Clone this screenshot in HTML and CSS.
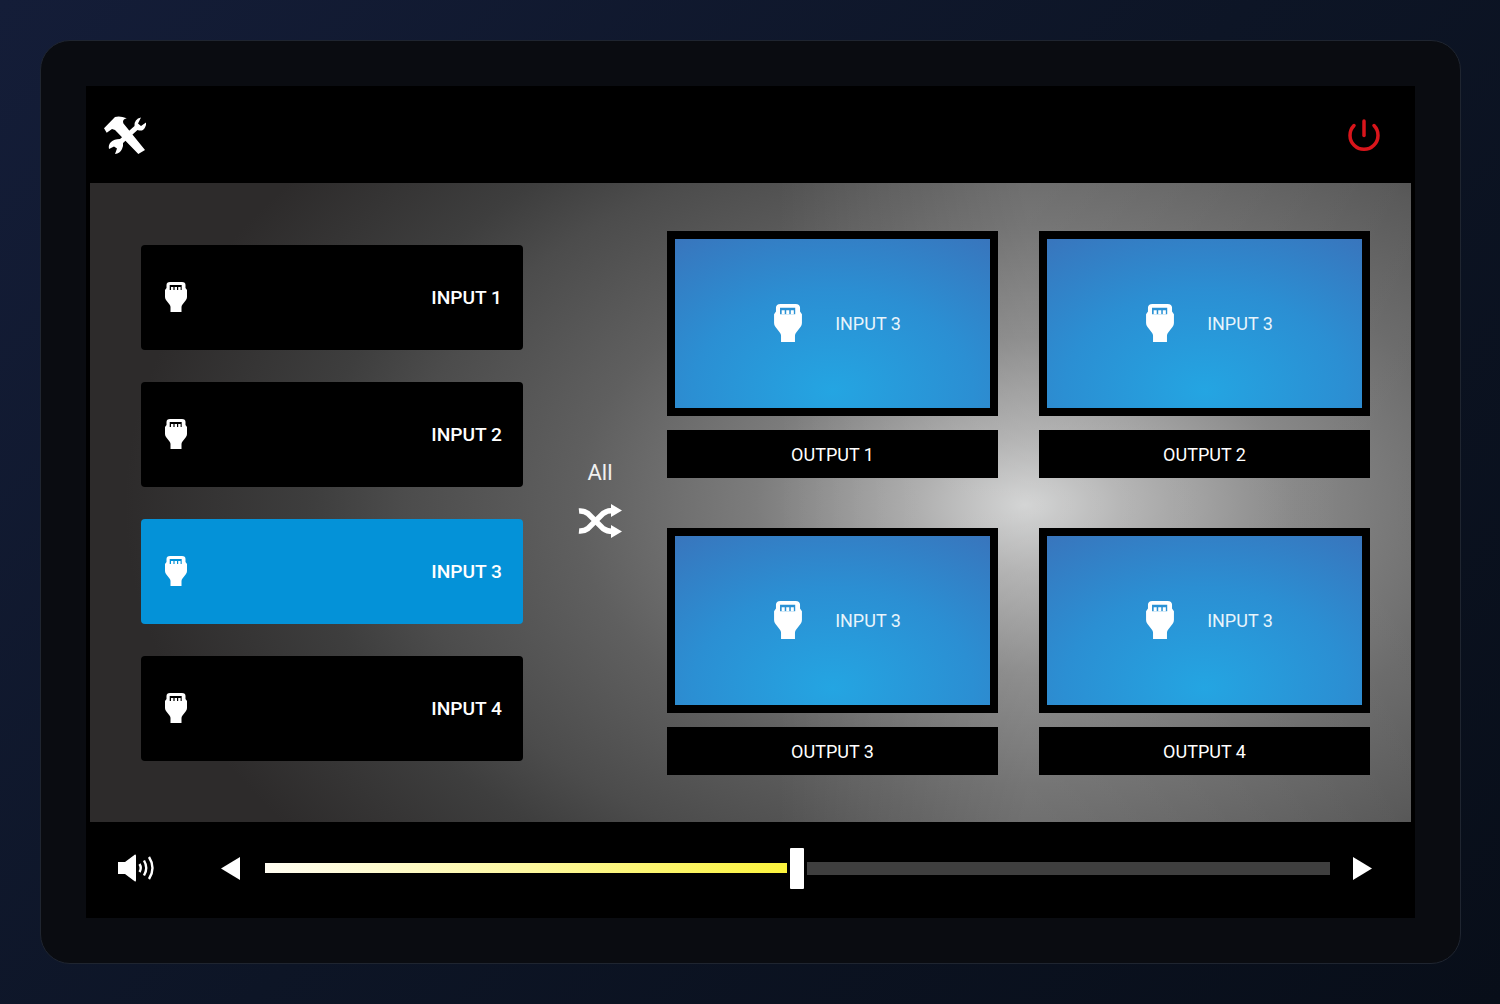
FILE: index.html
```html
<!DOCTYPE html>
<html lang="en">
<head>
    <meta charset="UTF-8">
    <meta name="viewport" content="width=device-width, initial-scale=1.0">
    <title>Video Matrix Control</title>
    <link rel="stylesheet" href="styles.css">
</head>
<body>
    <svg class="icon-defs" width="0" height="0">
        <symbol id="hdmi" viewBox="0 0 22 30">
            <path fill-rule="evenodd" d="M5 0H17Q20.500 0 20.500 3V6L22 8V15Q22 16.500 21 18L17.500 22.500Q16.500 23.500 16.500 25V30H5.500V25Q5.500 23.500 4.500 22.500L1 18Q0 16.500 0 15V8L1.500 6V3Q1.500 0 5 0ZM4.700 3V8H16.700V3Z"/>
            <path d="M6 5H8.400V8H6ZM9.600 5H12V8H9.600ZM13.200 5H15.600V8H13.200Z"/>
        </symbol>
    </svg>

    <div class="device">
        <div class="screen">
            <header class="top-bar">
                <svg class="tools-icon" viewBox="0 0 44 40">
                    <path d="M1 13.300L12 2Q17 0.500 23.700 3.300Q19 4.500 20.300 8.300L42 35L35.300 39L12 15L9 14L3.700 17.700Z"/>
                    <path d="M38 2.500Q31 4 31.500 11L17 24Q11 24 8 27Q5 30 6 34L11 31.500L14 33.500L12 39Q17 38.500 19 34Q20.500 31 20 28L34.500 15Q40 17 42 12.500Q43.500 10 43 7.500L38 11L35 8.500Z"/>
                </svg>
                <svg class="power-icon" viewBox="0 0 32 32">
                    <path d="M6 6.500A14 14 0 1 0 26 6.500"/>
                    <path d="M16 2V16.500"/>
                </svg>
            </header>

            <main class="main-area">
                <div class="input-list">
                    <button class="input-btn">
                        <svg class="hdmi-icon"><use href="#hdmi"/></svg>
                        <span>INPUT 1</span>
                    </button>
                    <button class="input-btn">
                        <svg class="hdmi-icon"><use href="#hdmi"/></svg>
                        <span>INPUT 2</span>
                    </button>
                    <button class="input-btn active">
                        <svg class="hdmi-icon"><use href="#hdmi"/></svg>
                        <span>INPUT 3</span>
                    </button>
                    <button class="input-btn">
                        <svg class="hdmi-icon"><use href="#hdmi"/></svg>
                        <span>INPUT 4</span>
                    </button>
                </div>

                <div class="all-switch">
                    <span>All</span>
                    <svg class="shuffle-icon" viewBox="0 0 44 34">
                        <path class="line" d="M1 7Q6 6.500 10 9.500L25 24.500Q29 27.500 35 27.500"/>
                        <path class="line" d="M1 27Q6 27.500 10 24.500L25 9.500Q29 6.500 35 6.500"/>
                        <path d="M33 0L44 6.500L33 13ZM33 21L44 27.500L33 34Z"/>
                    </svg>
                </div>

                <div class="output-grid">
                    <div class="output">
                        <div class="monitor">
                            <svg class="hdmi-icon large"><use href="#hdmi"/></svg>
                            <span>INPUT 3</span>
                        </div>
                        <div class="output-label">OUTPUT 1</div>
                    </div>
                    <div class="output">
                        <div class="monitor">
                            <svg class="hdmi-icon large"><use href="#hdmi"/></svg>
                            <span>INPUT 3</span>
                        </div>
                        <div class="output-label">OUTPUT 2</div>
                    </div>
                    <div class="output">
                        <div class="monitor">
                            <svg class="hdmi-icon large"><use href="#hdmi"/></svg>
                            <span>INPUT 3</span>
                        </div>
                        <div class="output-label">OUTPUT 3</div>
                    </div>
                    <div class="output">
                        <div class="monitor">
                            <svg class="hdmi-icon large"><use href="#hdmi"/></svg>
                            <span>INPUT 3</span>
                        </div>
                        <div class="output-label">OUTPUT 4</div>
                    </div>
                </div>
            </main>

            <footer class="volume-bar">
                <svg class="speaker-icon" viewBox="0 0 37 28">
                    <path class="cone" d="M0 8H7L17 0.500Q18 0 18 2V26Q18 28 17 27.500L7 20H0Z"/>
                    <path class="wave" d="M21.500 10Q24 14 21.500 18"/>
                    <path class="wave" d="M26 6.500Q30.500 14 26 21.500"/>
                    <path class="wave" d="M31 3Q38 14 31 25"/>
                </svg>
                <svg class="arrow-icon" viewBox="0 0 19 23"><path d="M0 11.500L19 0V23Z"/></svg>
                <div class="slider">
                    <div class="slider-fill"></div>
                    <div class="slider-thumb"></div>
                    <div class="slider-rest"></div>
                </div>
                <svg class="arrow-icon" viewBox="0 0 19 23"><path d="M19 11.500L0 0V23Z"/></svg>
            </footer>
        </div>
    </div>
</body>
</html>
```

FILE: styles.css
```css
:root {
    --black: #000000;
    --white: #ffffff;
    --blue: #0492d8;
}

html, body {
    height: 100%;
}

body {
    margin: 0;
    padding: 40px 39px 40px 40px;
    box-sizing: border-box;
    background: linear-gradient(135deg, #141d38 0%, #0d1526 50%, #080e19 100%);
    font-family: 'Roboto', 'Liberation Sans', sans-serif;
    color: var(--white);
}

.icon-defs {
    position: absolute;
}

.device {
    height: 924px;
    box-sizing: border-box;
    padding: 45px;
    background: #0a0c11;
    border: 1px solid #1f2530;
    border-radius: 30px;
}

.screen {
    height: 832px;
    display: flex;
    flex-direction: column;
    background: var(--black);
}

.top-bar {
    height: 97px;
    flex: none;
    display: flex;
    align-items: center;
    justify-content: space-between;
    padding: 0 35px 0 17px;
}

.tools-icon {
    width: 44px;
    height: 40px;
    fill: var(--white);
}

.power-icon {
    width: 32px;
    height: 32px;
    overflow: visible;
    fill: none;
    stroke: #d9151b;
    stroke-width: 3.5;
    stroke-linecap: round;
}

.main-area {
    flex: 1;
    margin: 0 4px;
    padding-left: 51px;
    display: flex;
    align-items: center;
    background:
        linear-gradient(90deg, rgba(255, 255, 255, 0) 52%, rgba(255, 255, 255, 0.14) 71%, rgba(255, 255, 255, 0.08) 100%),
        radial-gradient(ellipse 900px 560px at 935px 322px, #cdcece 0%, #a8a8a8 12%, #7c7c7c 30%, #5f5f5f 50%, #4c4c4c 69%, #3e3e3e 79%, #2d2b2b 100%);
}

.input-list {
    width: 382px;
    display: flex;
    flex-direction: column;
    gap: 32px;
}

.input-btn {
    height: 105px;
    padding: 0 21px 0 24px;
    display: flex;
    align-items: center;
    justify-content: space-between;
    background: var(--black);
    border: none;
    border-radius: 4px;
    color: var(--white);
    font-family: inherit;
    font-size: 19.2px;
    font-weight: 500;
}

.input-btn.active {
    background: var(--blue);
}

.hdmi-icon {
    width: 22px;
    height: 30px;
    fill: var(--white);
}

.hdmi-icon.large {
    width: 28px;
    height: 38px;
}

.all-switch {
    width: 144px;
    box-sizing: border-box;
    padding-left: 10px;
    margin-bottom: 8px;
    display: flex;
    flex-direction: column;
    align-items: center;
    gap: 19px;
    font-size: 22px;
    color: #f0f0f0;
}

.shuffle-icon {
    width: 44px;
    height: 34px;
    fill: var(--white);
}

.shuffle-icon .line {
    fill: none;
    stroke: var(--white);
    stroke-width: 5.5;
}

.output-grid {
    display: grid;
    grid-template-columns: 331px 331px;
    column-gap: 41px;
    row-gap: 50px;
}

.monitor {
    height: 185px;
    box-sizing: border-box;
    padding-left: 10px;
    display: flex;
    align-items: center;
    justify-content: center;
    gap: 33px;
    border: 8px solid var(--black);
    background: radial-gradient(ellipse 280px 200px at 50% 90%, #24a5e2 0%, #2b8fd3 50%, #3a72ba 100%);
    font-size: 18px;
    color: #e8f4fb;
}

.output-label {
    height: 47px;
    padding-top: 1px;
    margin-top: 14px;
    display: flex;
    align-items: center;
    justify-content: center;
    background: var(--black);
    font-size: 18px;
}

.volume-bar {
    height: 96px;
    box-sizing: border-box;
    flex: none;
    display: flex;
    align-items: center;
    padding: 0 43px 4px 32px;
}

.speaker-icon {
    width: 37px;
    height: 28px;
    margin-right: 66px;
}

.speaker-icon .cone {
    fill: var(--white);
}

.speaker-icon .wave {
    fill: none;
    stroke: var(--white);
    stroke-width: 2.4;
}

.arrow-icon {
    width: 19px;
    height: 23px;
    fill: var(--white);
    flex: none;
}

.slider {
    flex: 1;
    margin: 0 23px 0 25px;
    display: flex;
    align-items: center;
}

.slider-fill {
    width: 522px;
    height: 10px;
    background: linear-gradient(90deg, #fffdf2 0%, #fdf8a0 50%, #fbf33c 100%);
}

.slider-thumb {
    width: 14px;
    height: 41px;
    margin: 0 3px;
    background: var(--white);
    border-radius: 1px;
}

.slider-rest {
    flex: 1;
    height: 13px;
    background: #3f3f3f;
}
```
